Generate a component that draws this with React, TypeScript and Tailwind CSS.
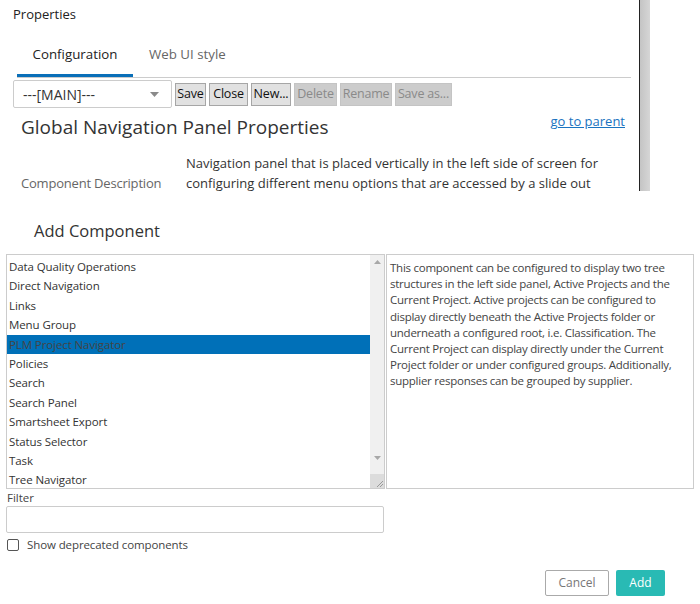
import React from "react";

const items = [
  "Data Quality Operations",
  "Direct Navigation",
  "Links",
  "Menu Group",
  "PLM Project Navigator",
  "Policies",
  "Search",
  "Search Panel",
  "Smartsheet Export",
  "Status Selector",
  "Task",
  "Tree Navigator",
];

function Btn({ label, w, disabled }: { label: string; w: string; disabled?: boolean }) {
  return (
    <div
      className={
        (disabled
          ? "border-[#c4c4c4] bg-[#cccccc] text-[#8a8a8a] "
          : "border-[#a6a6a6] bg-[#e1e1e1] text-[#111] ") +
        w +
        " h-[23px] shrink-0 flex items-center justify-center border text-[12.5px] tracking-[-0.2px] whitespace-nowrap"
      }
    >
      {label}
    </div>
  );
}

export default function App() {
  return (
    <div
      className="w-[700px] h-[604px] bg-white text-[#333] overflow-hidden"
      style={{ fontFamily: '"Open Sans", "Noto Sans", sans-serif' }}
    >
      {/* Top properties panel */}
      <div className="flex h-[191px] overflow-hidden">
        <div className="w-[639px] h-[191px] overflow-hidden">
          <div className="pl-[13px] pt-[5px] h-[36px] text-[13px] leading-[18px] text-[#222]">Properties</div>
          <div className="ml-[17px] mr-[8px] flex border-b border-[#cccccc] h-[42px]">
            <div className="w-[116px] flex flex-col">
              <div className="h-[38px] flex items-center justify-center text-[13.3px] text-[#222]">Configuration</div>
              <div className="h-[3px] bg-[#0a6fb8]" />
            </div>
            <div className="h-[38px] flex items-center pl-[16px] text-[13.3px] text-[#666]">Web UI style</div>
          </div>
          <div className="flex items-center mt-[2px] ml-[13px] h-[28px] gap-[3px]">
            <div className="w-[159px] h-[28px] shrink-0 border border-[#cccccc] rounded-[2px] flex items-center justify-between pl-[9px] pr-[12px] text-[14px] text-[#333]">
              <span>---[MAIN]---</span>
              <svg width="9" height="5" viewBox="0 0 9 5">
                <path d="M0 0 L9 0 L4.5 5 Z" fill="#8a8a8a" />
              </svg>
            </div>
            <Btn label="Save" w="w-[31px]" />
            <Btn label="Close" w="w-[39px]" />
            <Btn label="New..." w="w-[40px]" />
            <Btn label="Delete" w="w-[43px]" disabled />
            <Btn label="Rename" w="w-[52px]" disabled />
            <Btn label="Save as..." w="w-[57px]" disabled />
          </div>
          <div className="flex justify-between items-start ml-[21px] mr-[14px] mt-[5px]">
            <div className="text-[19px] leading-[28px] text-[#333]">Global Navigation Panel Properties</div>
            <a className="text-[13px] leading-[18px] text-[#1a73c0] underline -mt-[1px]">go to parent</a>
          </div>
          <div className="flex mt-[12px]">
            <div className="w-[186px] shrink-0 pl-[21px] pt-[20px] text-[13px] leading-[20px] text-[#666] whitespace-nowrap tracking-[-0.2px]">Component Description</div>
            <div className="w-[440px] text-[13px] leading-[20px] text-[#333]">
              Navigation panel that is placed vertically in the left side of screen for configuring different menu options that are accessed by a slide out
            </div>
          </div>
        </div>
        <div className="w-[11px] h-[191px] border-l border-[#222] bg-gradient-to-r from-[#c4c4c4] to-[#d6d6d6]" />
      </div>

      {/* Add component dialog */}
      <div className="pt-[29px]">
        <div className="pl-[34px] text-[16.5px] leading-[22px] text-[#333]">Add Component</div>
        <div className="flex mt-[12px] ml-[6px] h-[235px]">
          <div className="w-[379px] border border-[#cccccc] flex">
            <div className="flex-1 pt-[2px]">
              {items.map((it) => (
                <div
                  key={it}
                  className={
                    it === "PLM Project Navigator"
                      ? "h-[19.4px] leading-[19px] pl-[2px] text-[11.5px] tracking-[-0.1px] bg-[#0070b8] text-[#444]"
                      : "h-[19.4px] leading-[19px] pl-[2px] text-[11.5px] tracking-[-0.1px] text-[#333]"
                  }
                >
                  {it}
                </div>
              ))}
            </div>
            <div className="w-[14px] bg-[#f0f0f0] flex flex-col items-center justify-between">
              <svg className="mt-[5px]" width="7" height="4" viewBox="0 0 7 4">
                <path d="M0 4 L7 4 L3.5 0 Z" fill="#a8a8a8" />
              </svg>
              <div className="flex flex-col items-center">
                <svg className="mb-[14px]" width="7" height="4" viewBox="0 0 7 4">
                  <path d="M0 0 L7 0 L3.5 4 Z" fill="#a8a8a8" />
                </svg>
                <div className="w-[14px] h-[14px] bg-[#dcdcdc] flex items-end justify-end">
                  <svg width="10" height="10" viewBox="0 0 10 10">
                    <path d="M9 3 L3 9 M9 6 L6 9" stroke="#999" strokeWidth="1" />
                  </svg>
                </div>
              </div>
            </div>
          </div>
          <div className="w-[308px] border border-[#cccccc] ml-[1px] px-[3px] pt-[5px] text-[11.5px] tracking-[-0.25px] leading-[16.2px] text-[#444]">
            This component can be configured to display two tree structures in the left side panel, Active Projects and the Current Project. Active projects can be configured to display directly beneath the Active Projects folder or underneath a configured root, i.e. Classification. The Current Project can display directly under the Current Project folder or under configured groups. Additionally, supplier responses can be grouped by supplier.
          </div>
        </div>
        <div className="pl-[7px] mt-[1px] text-[11.5px] leading-[16px] text-[#444]">Filter</div>
        <div className="ml-[6px] w-[378px] h-[27px] border border-[#cccccc] rounded-[2px]" />
        <div className="flex items-center ml-[7px] mt-[5px] gap-[8px]">
          <div className="w-[12px] h-[12px] border border-[#555] rounded-[2px]" />
          <span className="text-[11.5px] tracking-[-0.1px] leading-[14px] text-[#444]">Show deprecated components</span>
        </div>
        <div className="flex justify-end gap-[7px] mr-[35px] mt-[18px]">
          <div className="w-[64px] h-[26px] border border-[#aaaaaa] rounded-[2px] flex items-center justify-center text-[12px] text-[#777]">Cancel</div>
          <div className="w-[49px] h-[26px] bg-[#29bab4] rounded-[2px] flex items-center justify-center text-[12px] text-white">Add</div>
        </div>
      </div>
    </div>
  );
}
